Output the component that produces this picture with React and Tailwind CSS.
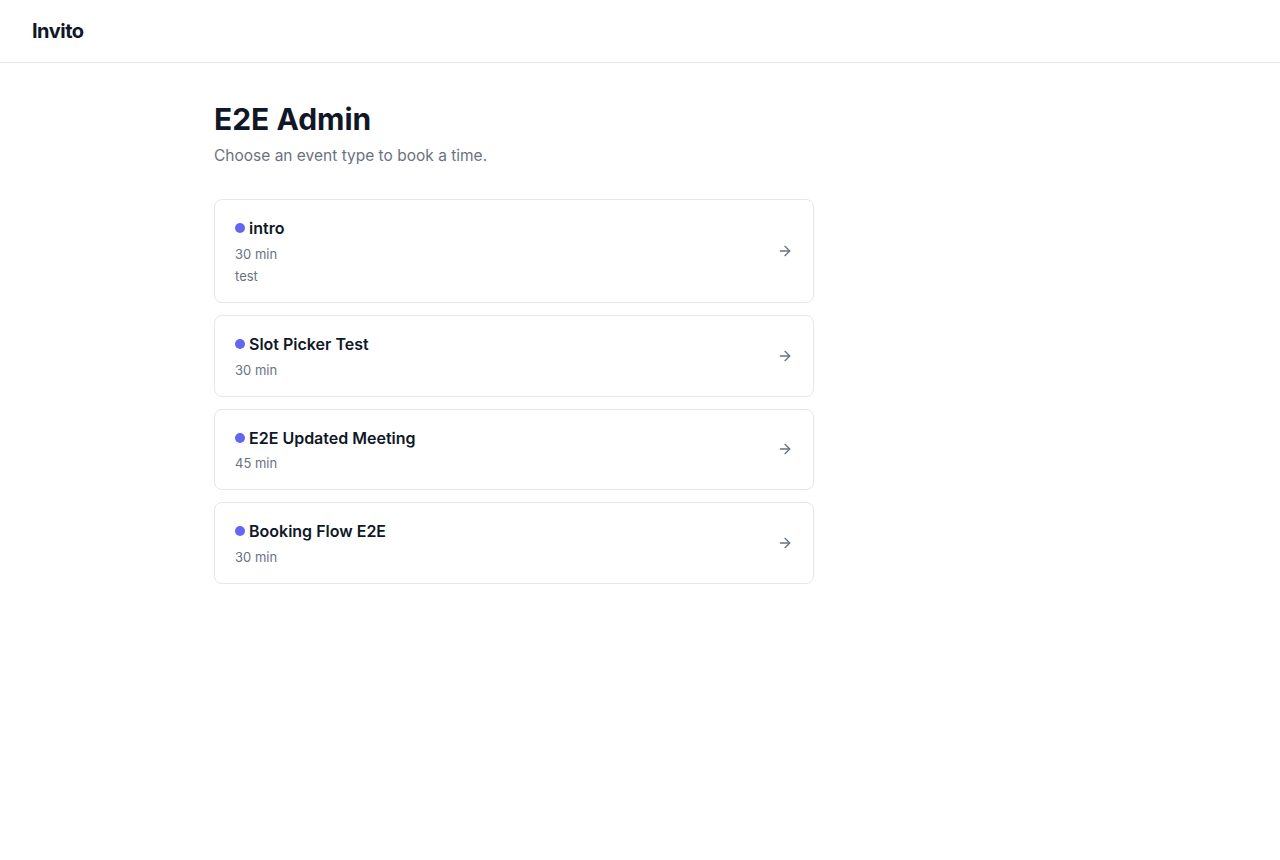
import React from 'react';
import { ArrowRight } from 'lucide-react';

const eventTypes = [
  { id: 1, title: 'intro', duration: '30 min', description: 'test' },
  { id: 2, title: 'Slot Picker Test', duration: '30 min' },
  { id: 3, title: 'E2E Updated Meeting', duration: '45 min' },
  { id: 4, title: 'Booking Flow E2E', duration: '30 min' },
];

export default function App() {
  return (
    <div className="min-h-screen bg-white text-gray-900" style={{ fontFamily: 'Inter, "Noto Sans", sans-serif' }}>
      {/* Header */}
      <header className="h-[63px] border-b border-gray-200 px-8 flex items-center">
        <span className="text-xl font-bold tracking-tight text-gray-900">Invito</span>
      </header>

      {/* Main */}
      <main className="max-w-[900px] mx-auto px-6 pt-[38px]">
        <h1 className="text-3xl leading-9 font-bold text-gray-900">E2E Admin</h1>
        <p className="mt-[7px] text-[15.5px] leading-6 text-gray-500">Choose an event type to book a time.</p>

        <div className="mt-[31px] max-w-[600px] flex flex-col gap-3">
          {eventTypes.map((ev) => (
            <a
              key={ev.id}
              href="#"
              className="flex items-center justify-between bg-white border border-gray-200 rounded-lg px-5 py-4 hover:border-gray-300 transition-colors"
            >
              <div>
                <div className="flex items-center gap-1">
                  <span className="w-2.5 h-2.5 rounded-full bg-[#6366f1]" />
                  <span className="text-base leading-6 font-semibold text-gray-900">{ev.title}</span>
                </div>
                <p className="mt-[3.5px] text-[13px] leading-5 text-gray-500">{ev.duration}</p>
                {ev.description && (
                  <p className="mt-[2.5px] text-[13px] leading-5 text-gray-500">{ev.description}</p>
                )}
              </div>
              <ArrowRight size={16} className="text-gray-500" />
            </a>
          ))}
        </div>
      </main>
    </div>
  );
}
